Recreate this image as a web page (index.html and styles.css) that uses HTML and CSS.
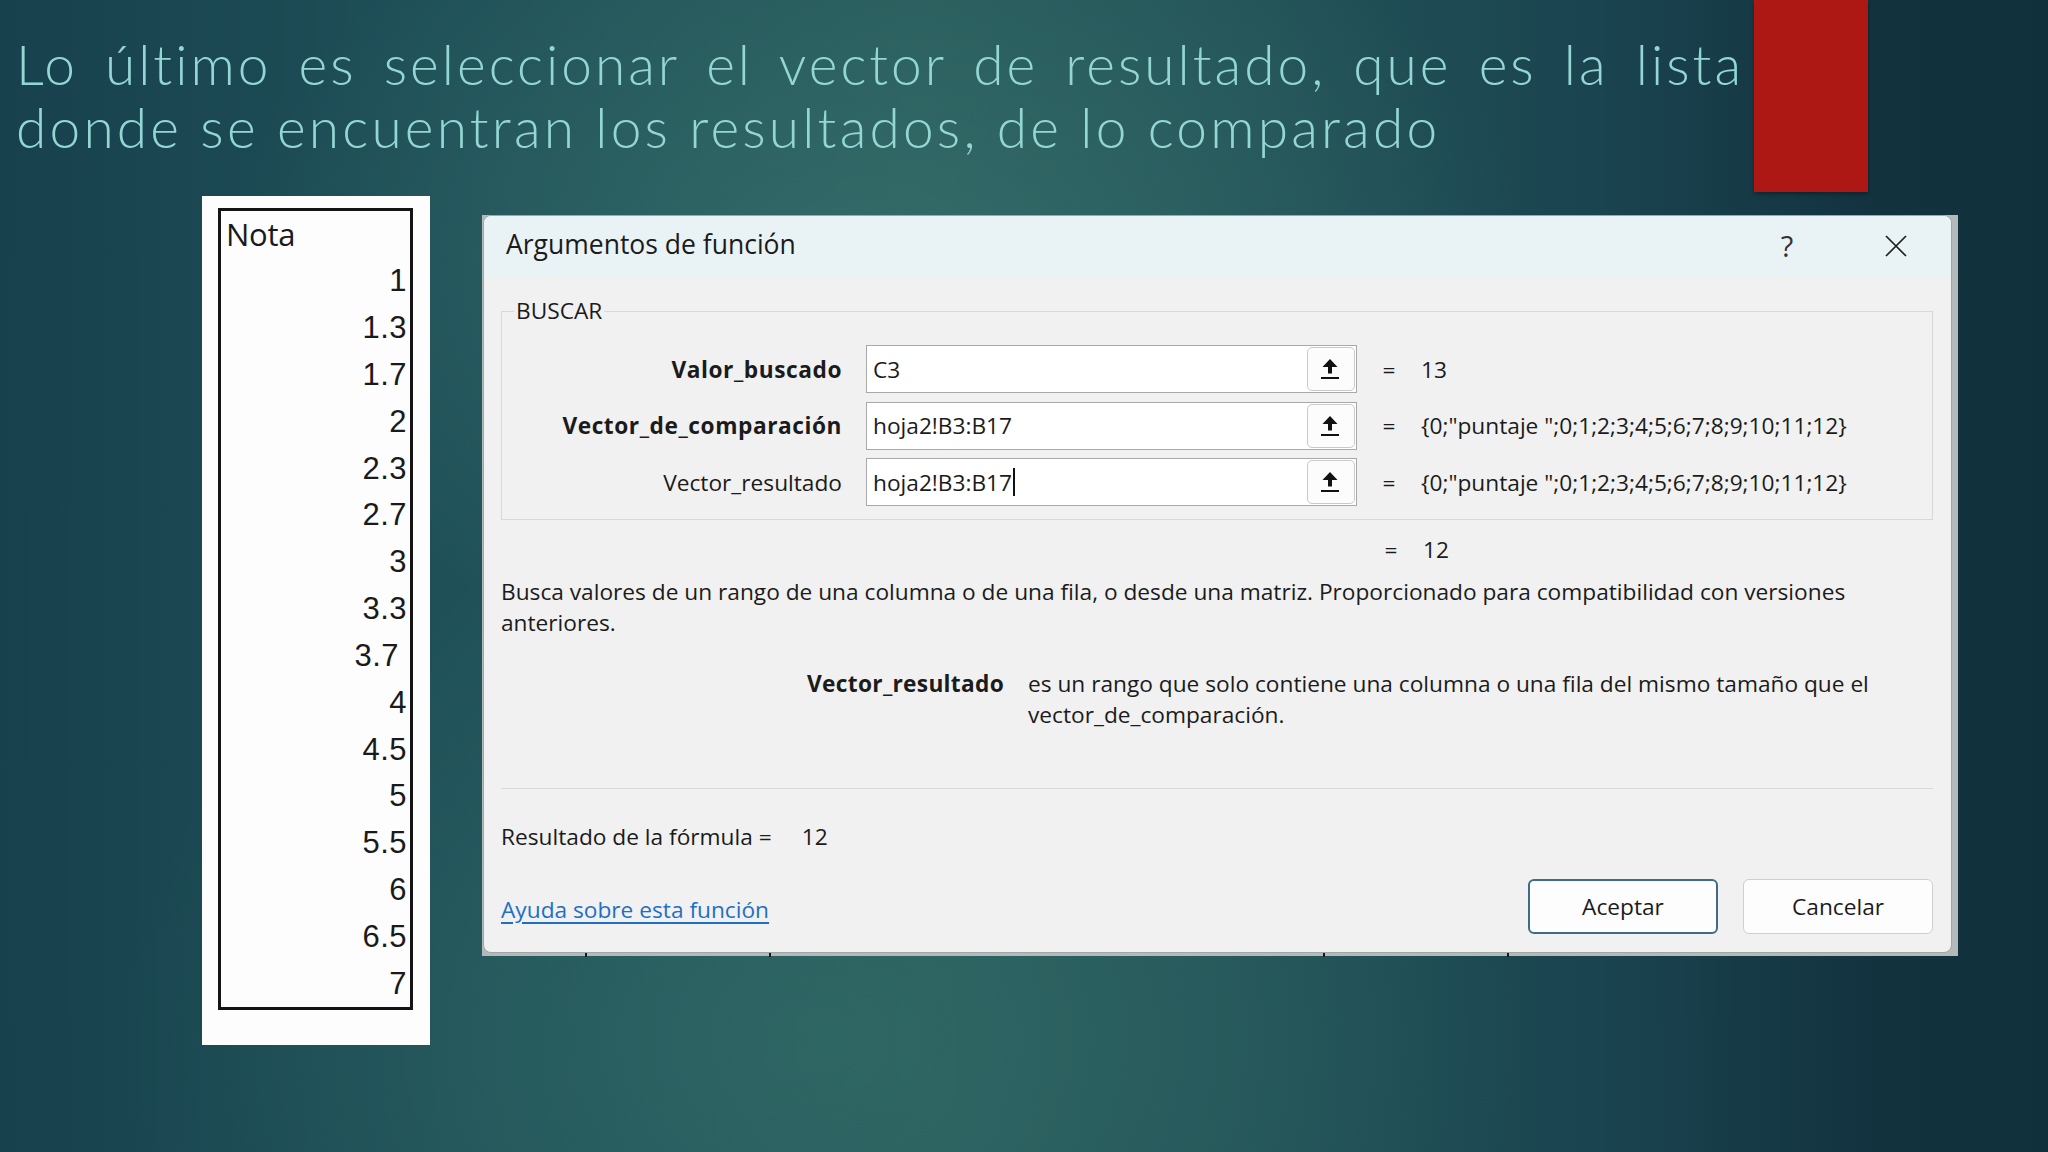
FILE: index.html
```html
<!DOCTYPE html>
<html lang="es">
<head>
<meta charset="utf-8">
<title>Argumentos de función</title>
<link rel="stylesheet" href="styles.css">
</head>
<body>
<div class="slide">
  <header class="top">
    <h1 class="title">
      <span class="line1">Lo último es seleccionar el vector de resultado, que es la lista</span>
      <span class="line2">donde se encuentran los resultados, de lo comparado</span>
    </h1>
    <div class="redbar"></div>
  </header>

  <main class="content">
    <div class="sheet">
      <div class="table">
        <div class="cell head">Nota</div>
        <div class="cell">1</div>
        <div class="cell">1.3</div>
        <div class="cell">1.7</div>
        <div class="cell">2</div>
        <div class="cell">2.3</div>
        <div class="cell">2.7</div>
        <div class="cell">3</div>
        <div class="cell">3.3</div>
        <div class="cell shifted">3.7</div>
        <div class="cell">4</div>
        <div class="cell">4.5</div>
        <div class="cell">5</div>
        <div class="cell">5.5</div>
        <div class="cell">6</div>
        <div class="cell">6.5</div>
        <div class="cell">7</div>
      </div>
    </div>

    <div class="excel">
      <div class="dialog">
        <div class="titlebar">
          <span class="dtitle">Argumentos de función</span>
          <span class="help">?</span>
          <svg class="close" width="22" height="22" viewBox="0 0 22 22"><path d="M1 1 L21 21 M21 1 L1 21" stroke="#1e1e1e" stroke-width="1.7" fill="none"/></svg>
        </div>
        <div class="dbody">
          <fieldset class="group">
            <legend>BUSCAR</legend>
            <div class="args">
              <div class="arg">
                <span class="alabel bold">Valor_buscado</span>
                <div class="ainput"><span class="atext">C3</span><span class="refbtn"><svg width="20" height="22" viewBox="0 0 20 22"><path d="M10 1 L17.5 9 L12 9 L12 15.5 L8 15.5 L8 9 L2.5 9 Z" fill="#111"/><rect x="1" y="19" width="18" height="2" fill="#111"/></svg></span></div>
                <span class="eq">=</span>
                <span class="aval">13</span>
              </div>
              <div class="arg">
                <span class="alabel bold">Vector_de_comparación</span>
                <div class="ainput"><span class="atext">hoja2!B3:B17</span><span class="refbtn"><svg width="20" height="22" viewBox="0 0 20 22"><path d="M10 1 L17.5 9 L12 9 L12 15.5 L8 15.5 L8 9 L2.5 9 Z" fill="#111"/><rect x="1" y="19" width="18" height="2" fill="#111"/></svg></span></div>
                <span class="eq">=</span>
                <span class="aval">{0;"puntaje ";0;1;2;3;4;5;6;7;8;9;10;11;12}</span>
              </div>
              <div class="arg">
                <span class="alabel">Vector_resultado</span>
                <div class="ainput"><span class="atext">hoja2!B3:B17<span class="caret"></span></span><span class="refbtn"><svg width="20" height="22" viewBox="0 0 20 22"><path d="M10 1 L17.5 9 L12 9 L12 15.5 L8 15.5 L8 9 L2.5 9 Z" fill="#111"/><rect x="1" y="19" width="18" height="2" fill="#111"/></svg></span></div>
                <span class="eq">=</span>
                <span class="aval">{0;"puntaje ";0;1;2;3;4;5;6;7;8;9;10;11;12}</span>
              </div>
            </div>
          </fieldset>

          <div class="total"><span class="eq">=</span><span class="aval">12</span></div>

          <p class="desc">Busca valores de un rango de una columna o de una fila, o desde una matriz. Proporcionado para compatibilidad con versiones anteriores.</p>

          <div class="argdesc">
            <span class="argname">Vector_resultado</span>
            <span class="argtext">es un rango que solo contiene una columna o una fila del mismo tamaño que el vector_de_comparación.</span>
          </div>

          <div class="sep"></div>

          <div class="formula">Resultado de la fórmula =<span class="fval">12</span></div>

          <div class="footer">
            <a class="helplink" href="#">Ayuda sobre esta función</a>
            <div class="buttons">
              <button class="btn primary">Aceptar</button>
              <button class="btn">Cancelar</button>
            </div>
          </div>
        </div>
      </div>
      <div class="strip">
        <span class="tick t1"></span>
        <span class="tick t2"></span>
        <span class="tick t3"></span>
        <span class="tick t4"></span>
      </div>
    </div>
  </main>
</div>
</body>
</html>
```

FILE: styles.css
```css
html, body {
  margin: 0;
  padding: 0;
}

body {
  width: 2048px;
  height: 1152px;
  overflow: hidden;
}

.slide {
  width: 2048px;
  height: 1152px;
  background:
    radial-gradient(ellipse 650px 420px at 880px 260px, rgba(62, 122, 116, 0.55), rgba(62, 122, 116, 0) 100%),
    radial-gradient(ellipse 700px 520px at 820px 1040px, rgba(58, 120, 112, 0.45), rgba(58, 120, 112, 0) 100%),
    linear-gradient(90deg, #17414d 0%, #1f5058 22%, #275a5b 45%, #225257 62%, #1a4450 78%, #12323e 92%, #10303c 100%);
  display: flex;
  flex-direction: column;
}

/* ---------- header ---------- */
.top {
  display: flex;
  height: 192px;
}

.title {
  margin: 0;
  width: 1728px;
  padding: 33px 0 0 16px;
  font-family: "Lato", "Liberation Sans", sans-serif;
  font-weight: 300;
  font-size: 55px;
  line-height: 63px;
  color: #93d6d4;
  letter-spacing: 3.2px;
}

.title span {
  display: block;
  white-space: nowrap;
}

.title .line1 {
  text-align: justify;
  text-align-last: justify;
  white-space: normal;
  letter-spacing: 3px;
}

.redbar {
  margin-left: 10px;
  width: 114px;
  height: 192px;
  background: #ad1714;
  box-shadow: 0 2px 4px rgba(0, 0, 0, 0.35);
}

/* ---------- content ---------- */
.content {
  display: flex;
  align-items: flex-start;
  margin-top: 4px;
  padding-left: 202px;
}

.sheet {
  width: 228px;
  height: 849px;
  box-sizing: border-box;
  background: #fdfdfd;
  padding: 12px 0 0 16px;
}

.table {
  width: 195px;
  height: 802px;
  box-sizing: border-box;
  border: 3px solid #141414;
  display: flex;
  flex-direction: column;
  font-family: "Liberation Sans", Arial, sans-serif;
  font-size: 31px;
  letter-spacing: 0.5px;
  color: #1a1a1a;
}

.cell {
  flex: 1;
  display: flex;
  align-items: center;
  justify-content: flex-end;
  padding: 0 3px 0 5px;
}

.cell.head {
  justify-content: flex-start;
  font-family: "Open Sans", "Liberation Sans", sans-serif;
  font-size: 31px;
  letter-spacing: -0.3px;
}

.cell.shifted {
  padding-right: 11px;
}

/* ---------- excel dialog ---------- */
.excel {
  margin-left: 52px;
  margin-top: 19px;
  width: 1476px;
  height: 741px;
  background: #b4baba;
  display: flex;
  flex-direction: column;
}

.dialog {
  margin-left: 1px;
  width: 1469px;
  height: 738px;
  box-sizing: border-box;
  background: #f1f1f1;
  border: 1px solid #9ea6a6;
  border-radius: 8px;
  overflow: hidden;
  font-family: "Open Sans", "Noto Sans", sans-serif;
  font-size: 22.7px;
  color: #1b1b1b;
  display: flex;
  flex-direction: column;
}

.titlebar {
  height: 62px;
  flex: none;
  background: #e9f3f5;
  display: flex;
  align-items: center;
  padding-left: 22px;
}

.dtitle {
  font-size: 26.5px;
  flex: 1;
  padding-bottom: 6px;
}

.help {
  font-size: 29px;
  font-weight: 400;
  width: 20px;
  text-align: center;
  margin-right: 88px;
  padding-bottom: 4px;
  color: #333;
}

.close {
  margin-right: 44px;
  margin-bottom: 3px;
}

.dbody {
  padding: 0 18px 19px 17px;
  display: flex;
  flex-direction: column;
}

.group {
  margin: 18px 0 0 0;
  padding: 0 0 13px 0;
  border: 1px solid #d8d8d8;
  min-width: 0;
}

.group legend {
  margin-left: 12px;
  padding: 0 2px;
  font-size: 22.7px;
  line-height: 30px;
}

.args {
  padding-top: 19px;
  display: flex;
  flex-direction: column;
  gap: 8.5px;
}

.arg {
  display: flex;
  align-items: center;
  height: 48px;
}

.alabel {
  width: 340px;
  text-align: right;
  margin-right: 24px;
}

.bold {
  font-weight: 700;
  letter-spacing: 0.55px;
}

.ainput {
  width: 491px;
  height: 48px;
  box-sizing: border-box;
  border: 1px solid #a9a9a9;
  background: #ffffff;
  display: flex;
  align-items: center;
  padding: 1px 1px 1px 6px;
}

.atext {
  flex: 1;
  display: flex;
  align-items: center;
}

.caret {
  display: inline-block;
  width: 1.5px;
  height: 28px;
  background: #111;
  margin-left: 1px;
}

.refbtn {
  width: 48px;
  height: 44px;
  box-sizing: border-box;
  border: 1px solid #cacaca;
  border-radius: 5px;
  background: #fcfcfc;
  display: flex;
  align-items: center;
  justify-content: center;
}

.refbtn svg {
  margin-left: -3px;
}

.eq {
  width: 64px;
  text-align: center;
}

.total {
  display: flex;
  align-items: center;
  height: 30px;
  margin-top: 14px;
  padding-left: 858px;
}

.desc {
  margin: 12px 0 0 0;
  line-height: 31px;
}

.argdesc {
  display: flex;
  margin-top: 30px;
  line-height: 31px;
}

.argname {
  width: 503px;
  flex: none;
  text-align: right;
  font-weight: 700;
  letter-spacing: 0.3px;
  margin-right: 24px;
}

.argtext {
  width: 880px;
}

.sep {
  margin-top: 58px;
  height: 1px;
  background: #d9d9d9;
}

.formula {
  margin-top: 32px;
  line-height: 31px;
}

.fval {
  margin-left: 30px;
}

.footer {
  margin-top: 27px;
  display: flex;
  align-items: center;
  justify-content: space-between;
}

.helplink {
  color: #1f6fc5;
  text-decoration: underline;
  text-underline-offset: 4px;
  padding-top: 6px;
}

.buttons {
  display: flex;
  gap: 25px;
}

.btn {
  width: 190px;
  height: 55px;
  box-sizing: border-box;
  background: #fdfdfd;
  border: 1px solid #cfcfcf;
  border-radius: 6px;
  font-family: inherit;
  font-size: 22.7px;
  color: #1b1b1b;
  padding: 0;
}

.btn.primary {
  border: 2px solid #3e6c86;
}

.strip {
  position: relative;
  flex: 1;
}

.tick {
  position: absolute;
  top: 0;
  width: 2px;
  height: 4px;
  background: #1a1a1a;
}

.t1 { left: 103px; }
.t2 { left: 287px; }
.t3 { left: 841px; }
.t4 { left: 1025px; }
```
